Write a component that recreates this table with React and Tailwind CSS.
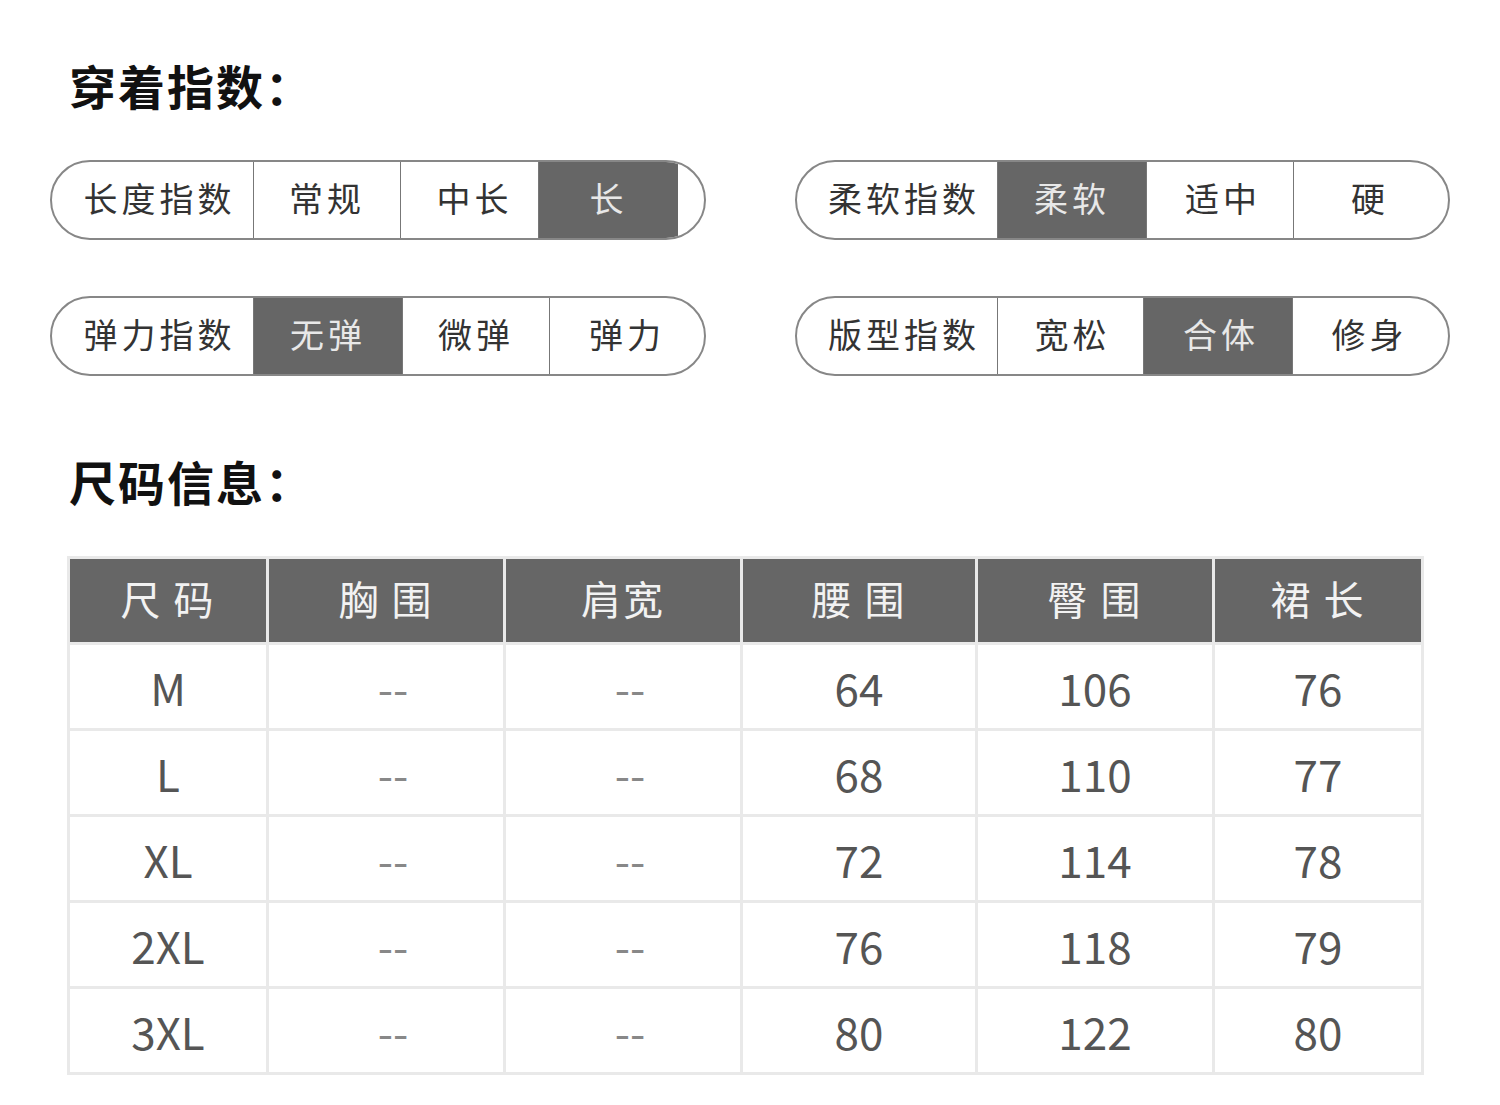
const FONT = { fontFamily: '"Noto Sans CJK SC", "Noto Sans", sans-serif' };

const pills = [
  [
    {
      label: '长度指数',
      lw: 'w-[201px]',
      items: [
        { t: '常规', w: 'w-[147px]' },
        { t: '中长', w: 'w-[138px]', pl: 'pl-[10px]' },
        { t: '长', w: 'w-[140px]', on: true },
      ],
      cap: true,
    },
    {
      label: '柔软指数',
      lw: 'w-[200px]',
      items: [
        { t: '柔软', w: 'w-[149px]', on: true },
        { t: '适中', w: 'w-[147px]', pl: 'pl-[6px]' },
        { t: '硬', w: 'flex-1', pl: 'pr-[2px]' },
      ],
    },
  ],
  [
    {
      label: '弹力指数',
      lw: 'w-[201px]',
      items: [
        { t: '无弹', w: 'w-[149px]', on: true },
        { t: '微弹', w: 'w-[147px]' },
        { t: '弹力', w: 'flex-1' },
      ],
    },
    {
      label: '版型指数',
      lw: 'w-[200px]',
      items: [
        { t: '宽松', w: 'w-[146px]', pl: 'pl-[4px]' },
        { t: '合体', w: 'w-[149px]', on: true, pl: 'pl-[6px]' },
        { t: '修身', w: 'flex-1', pl: 'pr-[2px]' },
      ],
    },
  ],
];

const sizes = [
  ['M', '--', '--', '64', '106', '76'],
  ['L', '--', '--', '68', '110', '77'],
  ['XL', '--', '--', '72', '114', '78'],
  ['2XL', '--', '--', '76', '118', '79'],
  ['3XL', '--', '--', '80', '122', '80'],
];

const heads = ['尺 码', '胸 围', '肩宽', '腰 围', '臀 围', '裙 长'];

function Pill({ p }) {
  return (
    <div className="flex h-full rounded-full border-2 border-[#878787] overflow-hidden bg-white">
      <div className={`${p.lw} flex items-center justify-center pl-[14px] pb-[5px] text-[34px] tracking-[4px] text-[#333]`}>
        {p.label}
      </div>
      {p.items.map((it) => (
        <div
          key={it.t}
          className={`${it.w} flex items-center justify-center border-l border-[#777] pb-[5px] text-[34px] tracking-[4px] ${
            it.on ? 'bg-[#666] text-[#e8e8e8]' : 'text-[#333]'
          } ${it.pl || ''}`}
        >
          {it.t}
        </div>
      ))}
      {p.cap && <div className="flex-1" />}
    </div>
  );
}

function Heading({ children }) {
  return (
    <h2 className="text-[47px] leading-none font-bold text-[#111] tracking-[2px]">{children}</h2>
  );
}

export default function App() {
  return (
    <div className="w-[1500px] h-[1105px] bg-white overflow-hidden" style={FONT}>
      {/* 穿着指数 */}
      <div className="pl-[69px] pt-[61px]">
        <Heading>穿着指数：</Heading>
      </div>

      <div className="pl-[50px] pt-[52px] flex flex-col gap-[56px]">
        {pills.map((row, i) => (
          <div key={i} className="flex gap-[89px] h-[80px]">
            <div className="w-[656px]">
              <Pill p={row[0]} />
            </div>
            <div className="w-[655px]">
              <Pill p={row[1]} />
            </div>
          </div>
        ))}
      </div>

      {/* 尺码信息 */}
      <div className="pl-[69px] pt-[81px]">
        <Heading>尺码信息：</Heading>
      </div>

      <div className="pl-[67px] pt-[52px]">
        <div className="w-[1357px] bg-[#e9e9e9] p-[3px] grid grid-cols-[196px_234px_234px_232px_234px_206px] gap-[3px]">
          {heads.map((h) => (
            <div
              key={h}
              className="h-[83px] bg-[#666] flex items-center justify-center pb-[6px] text-[40px] tracking-[2px] text-[#f2f2f2]"
              style={{ whiteSpace: 'pre' }}
            >
              {h}
            </div>
          ))}
          {sizes.map((r) =>
            r.map((v, j) => (
              <div
                key={r[0] + j}
                className={`h-[83px] bg-white flex items-center justify-center text-[44px] ${
                  v === '--' ? 'text-[#888] pl-[14px]' : 'text-[#555]'
                }`}
              >
                {v}
              </div>
            ))
          )}
        </div>
      </div>
    </div>
  );
}
